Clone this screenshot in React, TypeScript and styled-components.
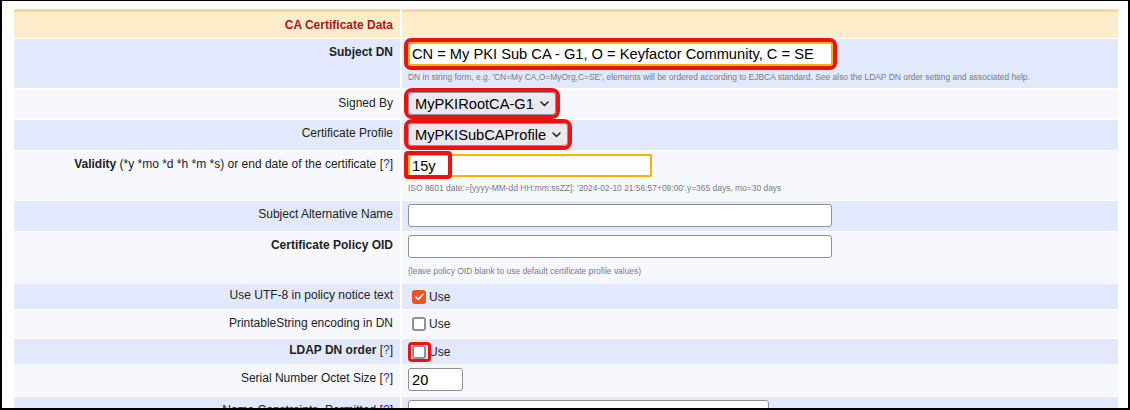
import React from 'react';
import styled, { createGlobalStyle, css } from 'styled-components';

const GlobalStyle = createGlobalStyle`
  html, body { margin: 0; padding: 0; background: #fff; }
  body { font-family: "Liberation Sans", Arial, sans-serif; color: #222; }
  * { box-sizing: border-box; }
`;

type Tone = 'header' | 'blue' | 'light';

const Frame = styled.div`
  width: 1130px;
  height: 410px;
  border: 2px solid #000;
  border-top-width: 1px;
  overflow: hidden;
  background: #fff;
  padding: 8px 10px 0 12px;
`;

const Table = styled.div`
  display: flex;
  flex-direction: column;
  gap: 1px;
`;

const Row = styled.div<{ $h: number }>`
  display: grid;
  grid-template-columns: 386px 1fr;
  column-gap: 2px;
  height: ${(p) => p.$h}px;
  flex: none;
`;

const toneBg = (t: Tone) =>
  t === 'header' ? '#feedcb' : t === 'blue' ? '#e3e9fc' : '#f6f8fe';

const Cell = styled.div<{ $tone: Tone }>`
  background: ${(p) => toneBg(p.$tone)};
  ${(p) =>
    p.$tone === 'header' &&
    css`
      border-top: 3px solid #fddb8c;
    `}
`;

const LabelCell = styled(Cell)<{ $top?: number }>`
  text-align: right;
  font-size: 12px;
  line-height: 14px;
  padding: ${(p) => p.$top ?? 6}px 7px 0 0;
  color: #222;
`;

const HeaderLabel = styled(Cell)`
  display: flex;
  align-items: center;
  justify-content: flex-end;
  padding-right: 7px;
  font-size: 12px;
  font-weight: bold;
  color: #b5121b;
`;

const ValueCell = styled(Cell)<{ $center?: boolean }>`
  padding: 3px 6px 0 6px;
  display: flex;
  flex-direction: column;
  align-items: flex-start;
  ${(p) =>
    p.$center &&
    css`
      padding-top: 0;
      justify-content: center;
    `}
`;

const Bold = styled.b`
  font-weight: bold;
`;

const Q = styled.span`
  color: #3434c4;
`;

const TextInput = styled.input<{ $w: number; $required?: boolean; $marked?: boolean }>`
  width: ${(p) => p.$w}px;
  height: 23px;
  font-family: "Liberation Sans", Arial, sans-serif;
  font-size: 14.667px;
  color: #000;
  background: #fff;
  border: 1px solid #8f8f9d;
  border-radius: 3px;
  padding: 0 3px;
  margin: 0;
  outline: none;
  ${(p) =>
    p.$required &&
    css`
      border: 2px solid #f6b500;
      border-radius: 1px;
      padding: 0 2px;
    `}
  ${(p) =>
    p.$marked &&
    css`
      height: 24px;
      outline: 4px solid #ee1111;
      outline-offset: 0;
      border-radius: 3px;
    `}
`;

const HelpText = styled.div<{ $gap: number }>`
  font-size: 8.45px;
  line-height: 10px;
  color: #7a7a86;
  margin-top: ${(p) => p.$gap}px;
  white-space: nowrap;
`;

const SelectWrap = styled.span<{ $w: number }>`
  position: relative;
  display: inline-flex;
  width: ${(p) => p.$w}px;
  height: 23px;
  border-radius: 4px;
  outline: 4px solid #ee1111;
  outline-offset: 0;
`;

const Select = styled.select`
  appearance: none;
  width: 100%;
  height: 100%;
  font-family: "Liberation Sans", Arial, sans-serif;
  font-size: 14.667px;
  color: #000;
  background: #e9e9ed;
  border: 1px solid #8f8f9d;
  border-radius: 4px;
  padding: 0 18px 0 6px;
  margin: 0;
`;

const Chevron = styled.svg`
  position: absolute;
  right: 7px;
  top: 9px;
  pointer-events: none;
`;

const Anchor = styled.span`
  position: relative;
  display: inline-flex;
`;

const Marker = styled.span<{ $l: number; $t: number; $w: number; $h: number; $b: number }>`
  position: absolute;
  left: ${(p) => p.$l}px;
  top: ${(p) => p.$t}px;
  width: ${(p) => p.$w}px;
  height: ${(p) => p.$h}px;
  border: ${(p) => p.$b}px solid #ee1111;
  border-radius: 4px;
  pointer-events: none;
`;

const CheckLine = styled.label`
  display: inline-flex;
  align-items: center;
  font-size: 12px;
  color: #222;
`;

const Box = styled.span<{ $checked?: boolean }>`
  position: relative;
  width: 14px;
  height: 14px;
  margin: 0 3px 0 4px;
  border-radius: 3px;
  display: inline-flex;
  align-items: center;
  justify-content: center;
  ${(p) =>
    p.$checked
      ? css`
          background: #e95420;
        `
      : css`
          background: #fff;
          border: 2px solid #8f8f9d;
        `}
`;

function Dropdown({ w, value }: { w: number; value: string }) {
  return (
    <SelectWrap $w={w}>
      <Select defaultValue={value}>
        <option>{value}</option>
      </Select>
      <Chevron width="9" height="6" viewBox="0 0 9 6">
        <path d="M1 1 L4.5 4.5 L8 1" fill="none" stroke="#222" strokeWidth="1.5" strokeLinecap="round" strokeLinejoin="round" />
      </Chevron>
    </SelectWrap>
  );
}

function Check({ checked, marked }: { checked?: boolean; marked?: boolean }) {
  return (
    <CheckLine>
      <Box $checked={checked}>
        {checked && (
          <svg width="9" height="8" viewBox="0 0 9 8">
            <path d="M1 4.2 L3.4 6.5 L8 1.3" fill="none" stroke="#fff" strokeWidth="1.7" strokeLinecap="round" strokeLinejoin="round" />
          </svg>
        )}
        {marked && <Marker $l={-6} $t={-5} $w={23} $h={20} $b={3.5} />}
      </Box>
      Use
    </CheckLine>
  );
}

export default function App() {
  return (
    <>
      <GlobalStyle />
      <Frame>
        <Table>
          <Row $h={29}>
            <HeaderLabel $tone="header">CA Certificate Data</HeaderLabel>
            <Cell $tone="header" />
          </Row>

          <Row $h={49}>
            <LabelCell $tone="blue">
              <Bold>Subject DN</Bold>
            </LabelCell>
            <ValueCell $tone="blue">
              <TextInput
                $w={425}
                $required
                $marked
                defaultValue="CN = My PKI Sub CA - G1, O = Keyfactor Community, C = SE"
              />
              <HelpText $gap={6}>
                DN in string form, e.g. 'CN=My CA,O=MyOrg,C=SE', elements will be ordered according to EJBCA standard. See also the LDAP DN order setting and associated help.
              </HelpText>
            </ValueCell>
          </Row>

          <Row $h={30}>
            <LabelCell $tone="light" $top={7}>Signed By</LabelCell>
            <ValueCell $tone="light">
              <Dropdown w={148} value="MyPKIRootCA-G1" />
            </ValueCell>
          </Row>

          <Row $h={30}>
            <LabelCell $tone="blue">Certificate Profile</LabelCell>
            <ValueCell $tone="blue">
              <Dropdown w={160} value="MyPKISubCAProfile" />
            </ValueCell>
          </Row>

          <Row $h={49}>
            <LabelCell $tone="light">
              <Bold>Validity</Bold> (*y *mo *d *h *m *s) or end date of the certificate [<Q>?</Q>]
            </LabelCell>
            <ValueCell $tone="light">
              <Anchor>
                <TextInput $w={244} $required defaultValue="15y" />
                <Marker $l={-4} $t={-3} $w={48} $h={28} $b={4} />
              </Anchor>
              <HelpText $gap={6}>
                ISO 8601 date:=[yyyy-MM-dd HH:mm:ssZZ]: '2024-02-10 21:56:57+09:00'.y=365 days, mo=30 days
              </HelpText>
            </ValueCell>
          </Row>

          <Row $h={30}>
            <LabelCell $tone="blue">Subject Alternative Name</LabelCell>
            <ValueCell $tone="blue">
              <TextInput $w={424} />
            </ValueCell>
          </Row>

          <Row $h={51}>
            <LabelCell $tone="light">
              <Bold>Certificate Policy OID</Bold>
            </LabelCell>
            <ValueCell $tone="light">
              <TextInput $w={424} />
              <HelpText $gap={8}>(leave policy OID blank to use default certificate profile values)</HelpText>
            </ValueCell>
          </Row>

          <Row $h={25}>
            <LabelCell $tone="blue" $top={4}>Use UTF-8 in policy notice text</LabelCell>
            <ValueCell $tone="blue" $center>
              <Check checked />
            </ValueCell>
          </Row>

          <Row $h={28}>
            <LabelCell $tone="light">PrintableString encoding in DN</LabelCell>
            <ValueCell $tone="light" $center>
              <Check />
            </ValueCell>
          </Row>

          <Row $h={25}>
            <LabelCell $tone="blue" $top={4}>
              <Bold>LDAP DN order</Bold> [<Q>?</Q>]
            </LabelCell>
            <ValueCell $tone="blue" $center>
              <Check marked />
            </ValueCell>
          </Row>

          <Row $h={31}>
            <LabelCell $tone="light">
              Serial Number Octet Size [<Q>?</Q>]
            </LabelCell>
            <ValueCell $tone="light">
              <TextInput $w={55} defaultValue="20" />
            </ValueCell>
          </Row>

          <Row $h={30}>
            <LabelCell $tone="blue">
              Name Constraints, Permitted [<Q>?</Q>]
            </LabelCell>
            <ValueCell $tone="blue">
              <TextInput $w={361} />
            </ValueCell>
          </Row>
        </Table>
      </Frame>
    </>
  );
}
